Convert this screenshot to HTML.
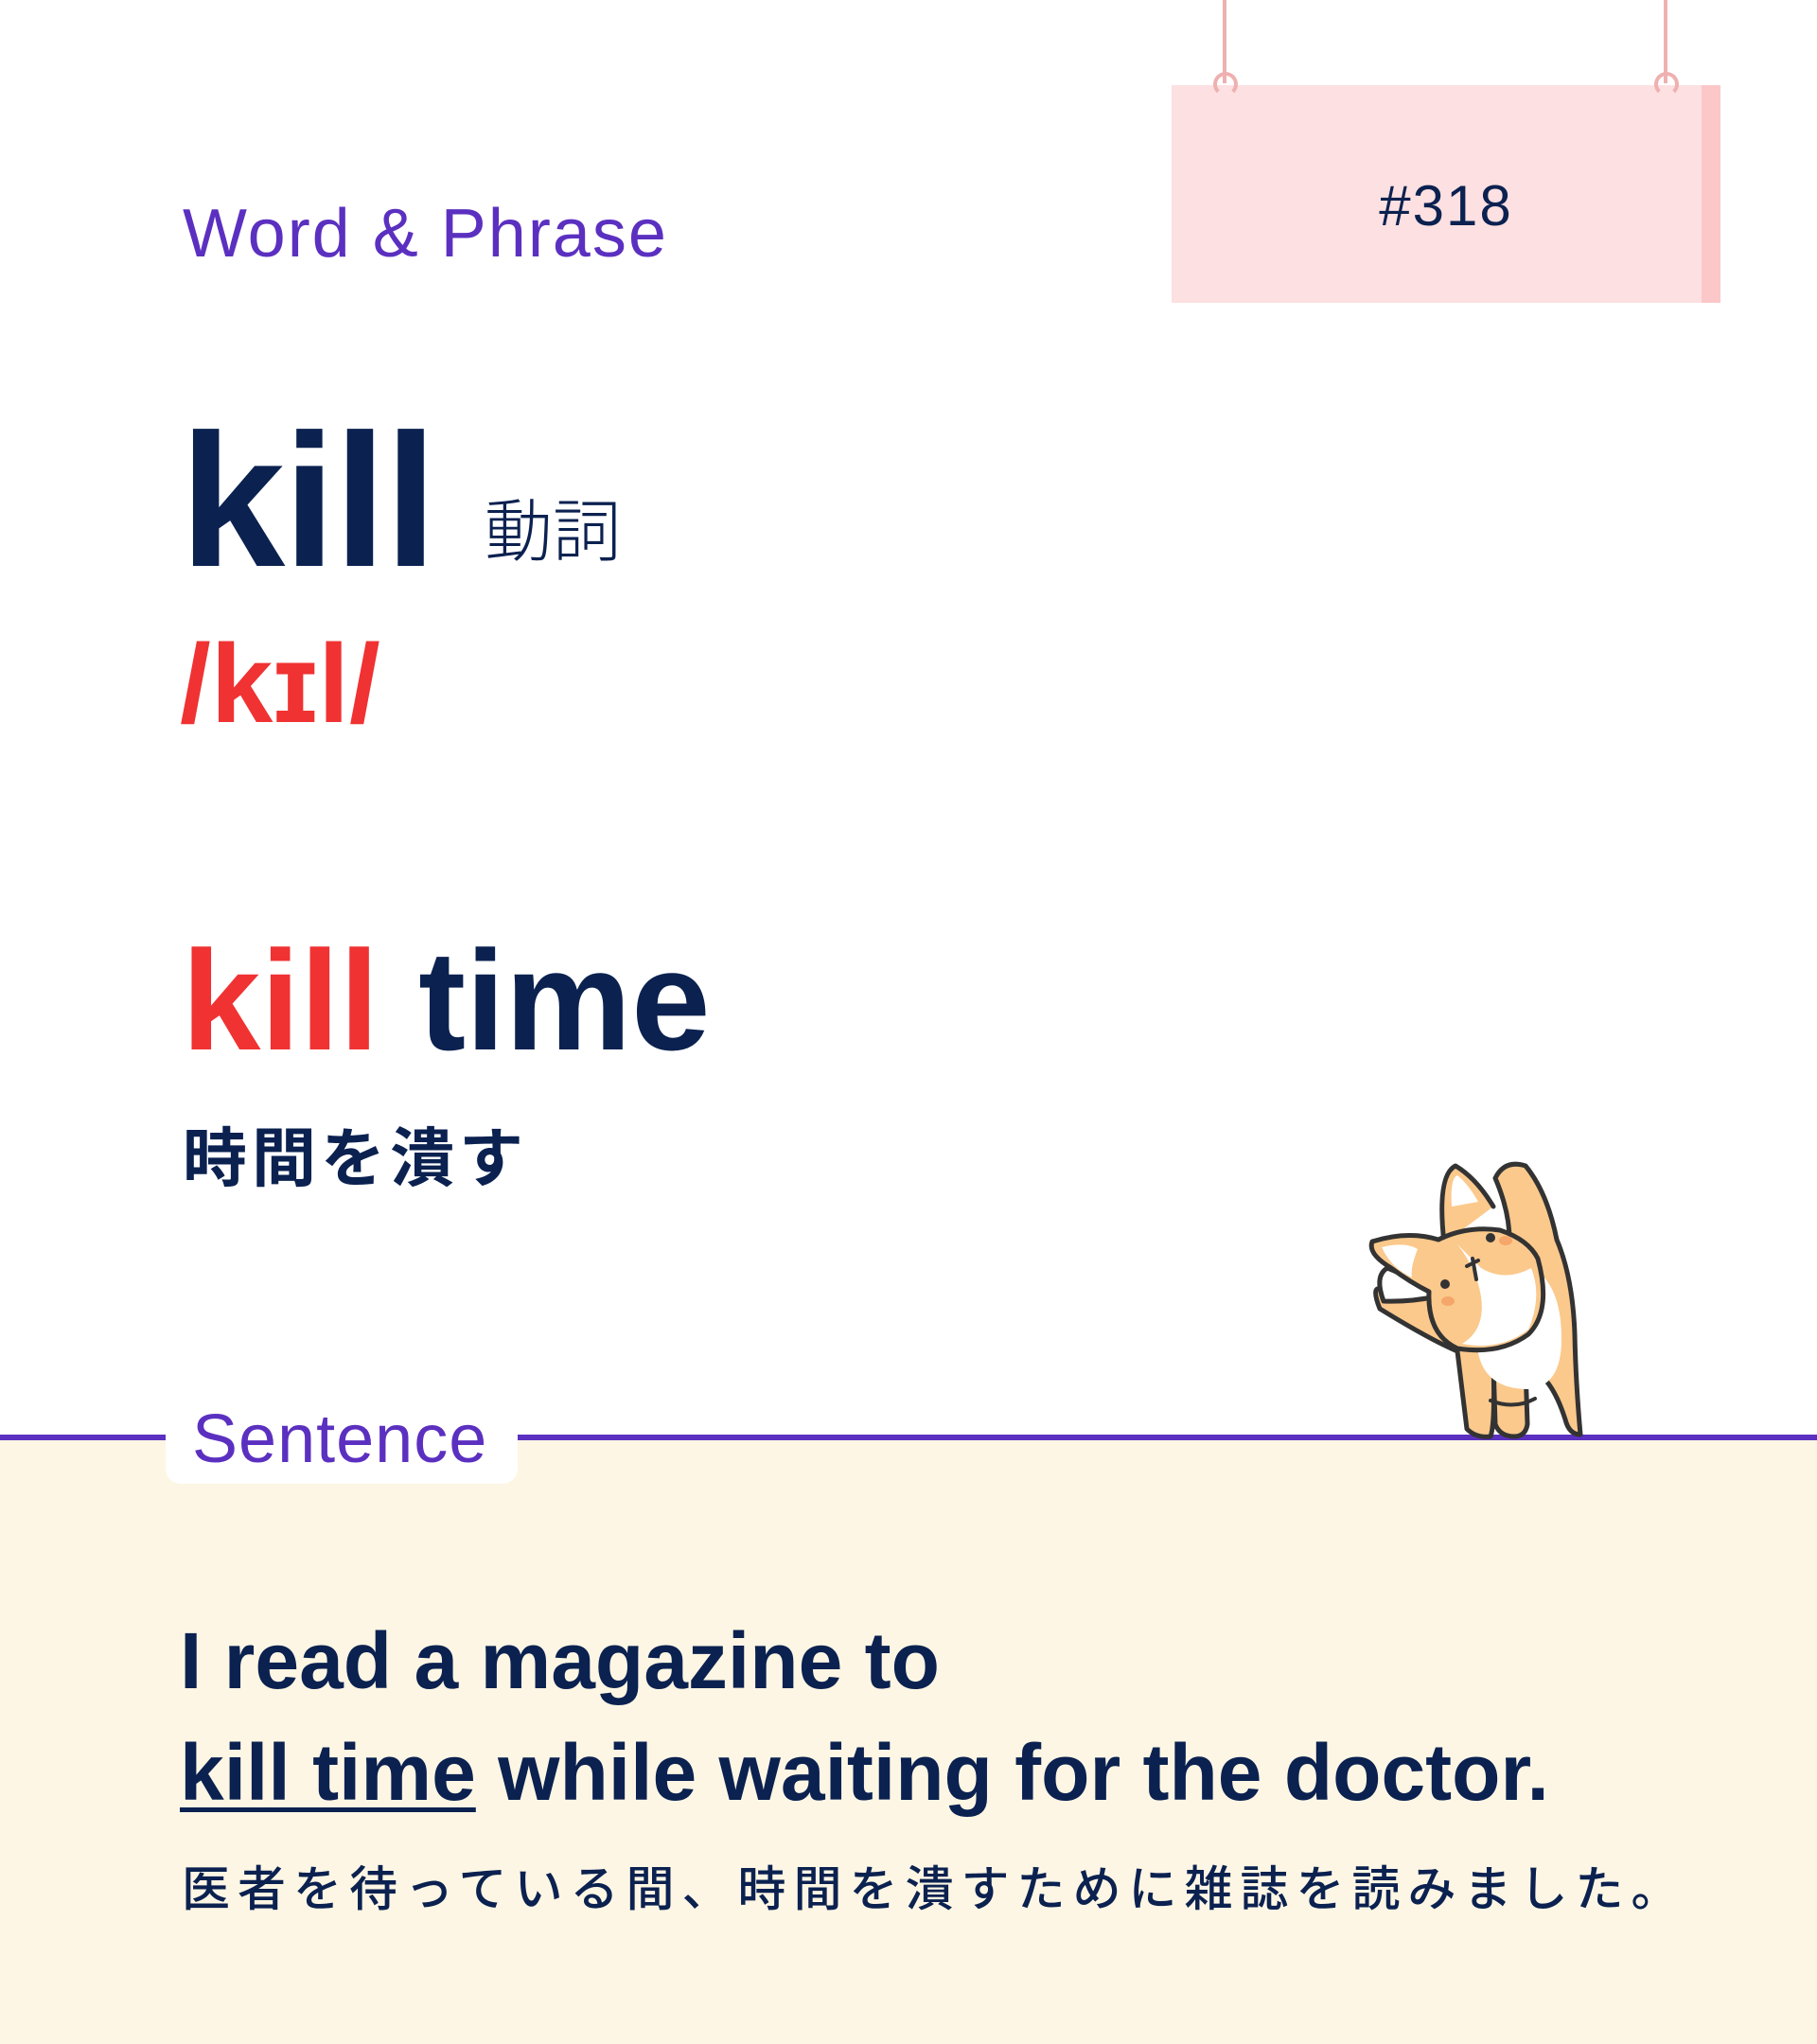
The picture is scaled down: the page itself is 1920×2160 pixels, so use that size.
<!DOCTYPE html>
<html><head><meta charset="utf-8"><style>
body{margin:0;width:1920px;height:2160px;position:relative;background:#fff;overflow:hidden;font-family:"Liberation Sans","Noto Sans CJK JP",sans-serif;color:#0b2150}
.a{position:absolute;white-space:nowrap}
</style></head><body>
<div class="a" style="left:0;top:1521px;width:1920px;height:639px;background:#fdf6e4"></div>
<div class="a" style="left:0;top:1516px;width:1920px;height:6px;background:#5b30c0"></div>
<div class="a" style="left:175px;top:1480px;width:372px;height:88px;background:#fff;border-radius:16px"></div>
<div class="a" style="left:203px;top:1476px;font-size:72px;line-height:90px;color:#5b30c0;letter-spacing:1px">Sentence</div>

<!-- sign -->
<div class="a" style="left:1292px;top:0;width:4px;height:88px;background:#efb0b0"></div>
<div class="a" style="left:1758px;top:0;width:4px;height:88px;background:#efb0b0"></div>
<div class="a" style="left:1238px;top:90px;width:580px;height:230px;background:#fde0e1"></div>
<div class="a" style="left:1798px;top:90px;width:20px;height:230px;background:#fcc7c8"></div>
<div class="a" style="left:1282px;top:76px;width:18px;height:18px;border:4px solid #efb0b0;border-radius:50%;border-bottom-color:transparent"></div>
<div class="a" style="left:1748px;top:76px;width:18px;height:18px;border:4px solid #efb0b0;border-radius:50%;border-bottom-color:transparent"></div>
<div class="a" style="left:1238px;top:178px;width:580px;text-align:center;font-size:60px;line-height:80px;letter-spacing:2px">#318</div>

<div class="a" style="left:193px;top:202px;font-size:72px;line-height:90px;color:#5b30c0;letter-spacing:2px">Word &amp; Phrase</div>
<div class="a" style="left:190px;top:420px;font-size:200px;line-height:220px;font-weight:bold;letter-spacing:-2px">kill</div>
<div class="a" style="left:512px;top:518px;font-size:72px;line-height:90px;font-weight:300">動詞</div>
<div class="a" style="left:190px;top:658px;font-size:118px;line-height:130px;font-weight:bold;color:#f03232">/kɪl/</div>
<div class="a" style="left:192px;top:972px;font-size:150px;line-height:170px;font-weight:bold"><span style="color:#f03232">kill</span> time</div>
<div class="a" style="left:193px;top:1180px;font-size:68px;line-height:90px;font-weight:bold;letter-spacing:5px">時間を潰す</div>

<div class="a" style="left:190px;top:1700px;font-size:84px;line-height:110px;font-weight:bold">I read a magazine to</div>
<div class="a" style="left:190px;top:1818px;font-size:84px;line-height:110px;font-weight:bold"><span style="text-decoration:underline;text-decoration-thickness:5px;text-underline-offset:8px">kill time</span> while waiting for the doctor.</div>
<div class="a" style="left:192px;top:1962px;font-size:51px;line-height:70px;letter-spacing:8px;font-weight:500">医者を待っている間、時間を潰すために雑誌を読みました。</div>

<!-- corgi -->
<svg class="a" style="left:1400px;top:1200px" width="300" height="325" viewBox="0 0 300 325" stroke="#333" stroke-width="5" stroke-linejoin="round" stroke-linecap="round">
<path d="M178 240 L180 305 Q185 318 200 318 Q212 318 214 305 L212 245 Q238 250 254 300 Q258 316 270 316 Q265 260 264 210 Q262 150 245 110 Q235 60 212 32 Q190 25 180 45 Q195 80 195 110 Q170 150 160 180 Q120 170 70 168 Q45 150 58 183 Q110 215 140 228 L150 310 Q160 320 175 318 Q180 305 178 240Z" fill="#fbc98c"/>
<path d="M160 190 Q170 150 210 135 Q250 150 250 215 Q250 265 215 268 Q170 268 162 230Z" fill="#fff" stroke="none"/>
<path d="M62 175 Q52 148 66 140 Q92 150 118 170 Q90 176 62 175Z" fill="#fff"/>
<path d="M126 114 Q118 42 138 32 Q160 45 178 75" fill="#fbc98c"/>
<path d="M134 75 Q132 45 140 42 Q152 52 162 70Z" fill="#fff" stroke="none"/>
<path d="M120 110 Q88 100 50 112 Q45 125 70 140 Q90 155 110 165 Q108 210 140 225 Q185 232 215 210 Q240 185 225 130 Q215 110 185 100 Q150 95 120 110Z" fill="#fbc98c"/>
<path d="M140 115 Q160 140 165 170 Q170 205 145 220 Q185 228 215 205 Q230 170 218 140 Q190 155 165 140 Q150 125 140 115Z" fill="#fff" stroke="none"/>
<path d="M60 118 Q85 112 98 120 Q90 140 92 150 Q70 140 60 118Z" fill="#fff" stroke="none"/>
<circle cx="175" cy="108" r="5" fill="#333" stroke="none"/><circle cx="127" cy="157" r="5" fill="#333" stroke="none"/>
<ellipse cx="191" cy="111" rx="7" ry="5" fill="#f5a66a" stroke="none"/><ellipse cx="130" cy="175" rx="7" ry="5" fill="#f5a66a" stroke="none"/>
<path d="M150 138 l12 -6 M156 130 l4 22" stroke-width="4"/>
<path d="M175 280 Q200 290 222 278" stroke-width="4" fill="none"/>
</svg>
</body></html>
